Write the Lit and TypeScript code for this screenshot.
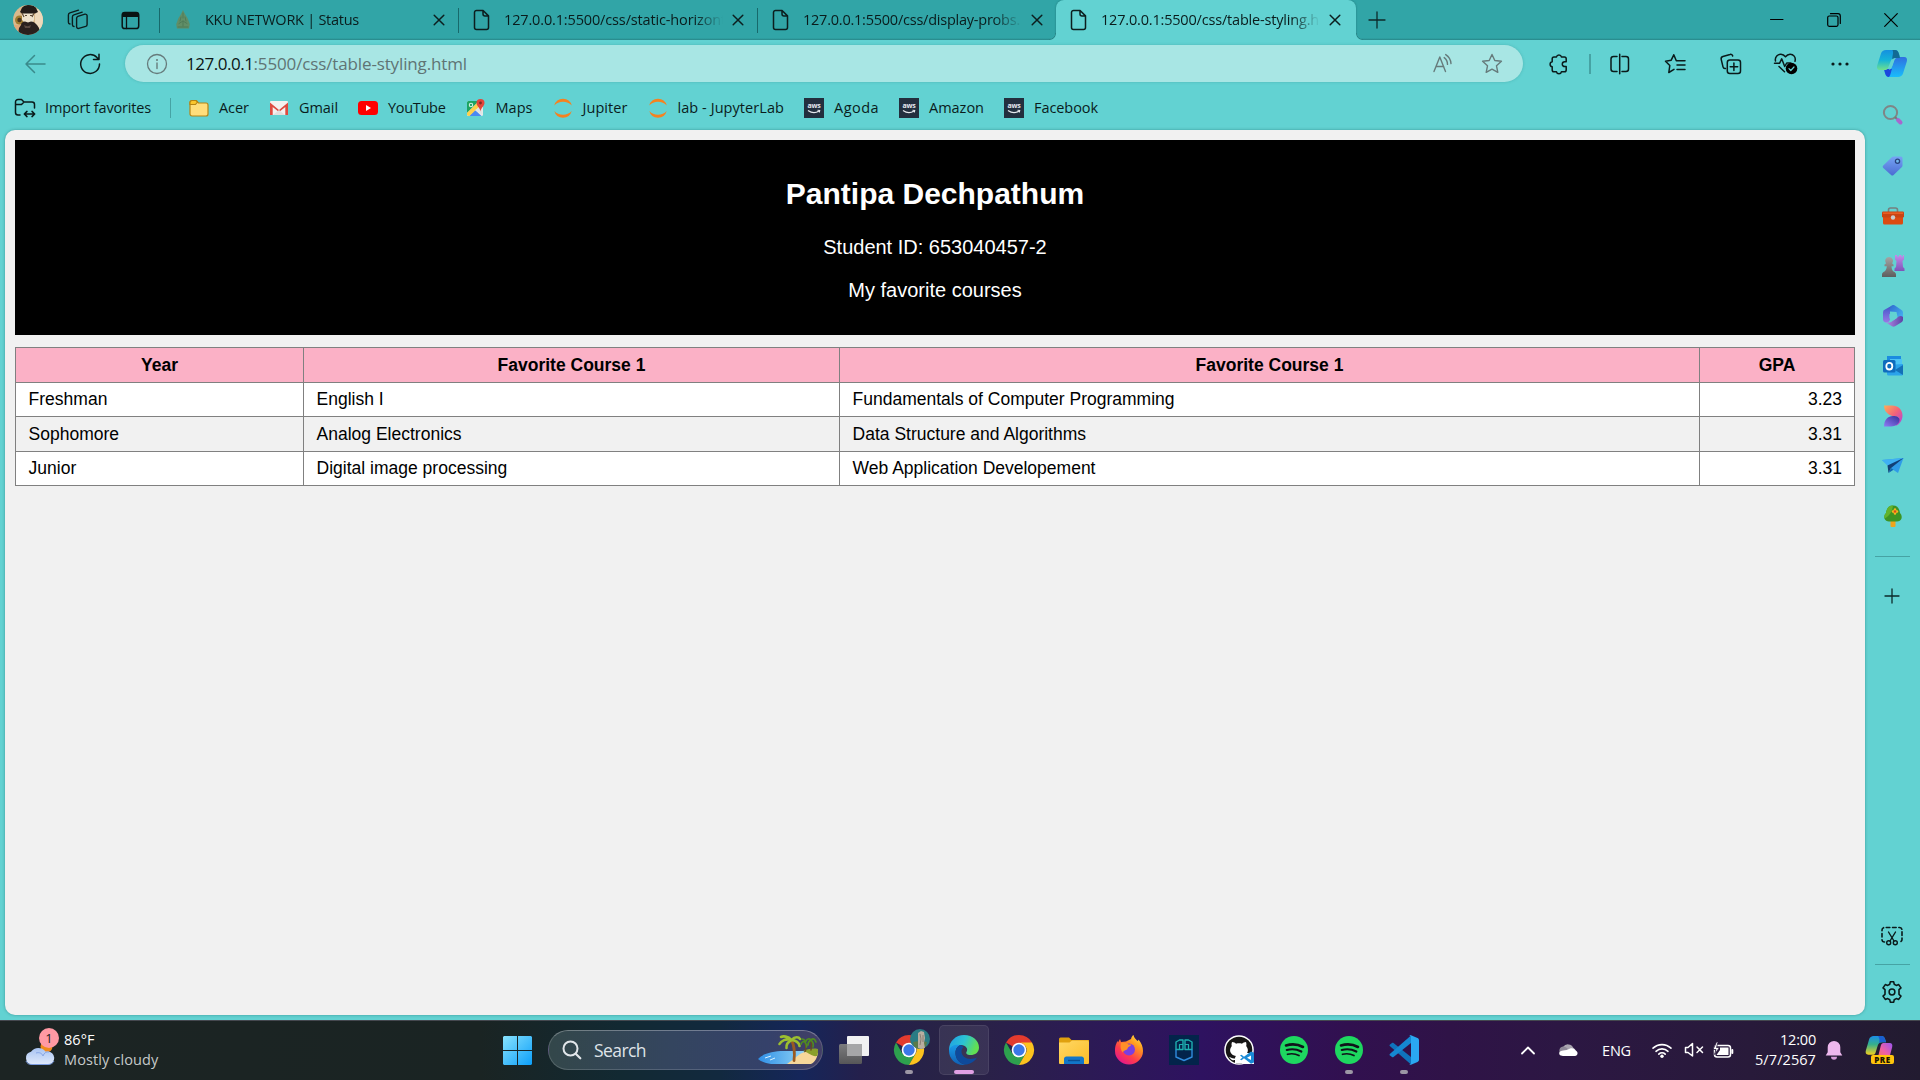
import { LitElement, html, css, svg, nothing } from "lit";
import { customElement, property } from "lit/decorators.js";

/* A one-line label whose tracking is tuned so that the text fills a given width. */
@customElement("fit-label")
class FitLabel extends LitElement {
  @property() text = "";
  @property({ type: Number }) w = 0;
  static styles = css`
    :host { display: inline-block; white-space: pre; flex: none; }
    .t { display: inline-block; }
  `;
  firstUpdated() {
    const el = this.renderRoot.querySelector(".t") as HTMLElement;
    this.style.width = this.w + "px";
    const natural = el.getBoundingClientRect().width;
    el.style.letterSpacing = (this.w - natural) / Math.max(1, this.text.length) + "px";
  }
  render() {
    return html`<span class="t">${this.text}</span>`;
  }
}

const box = (w: number, h: number, body: unknown) =>
  html`<svg width=${w} height=${h} viewBox="0 0 ${w} ${h}" fill="none" stroke-linecap="round" stroke-linejoin="round">${body}</svg>`;

/* ---------- line icons ---------- */
const docIcon = () => box(18, 22, svg`<path d="M3.5 1.5h6.6l5.4 5.4v11.600a2 2 0 0 1-2 2h-10a2 2 0 0 1-2-2v-15a2 2 0 0 1 2-2z M10 1.800v3.200a2 2 0 0 0 2 2h3.300" stroke="#0c1e1e" stroke-width="1.500"/>`);
const closeIcon = () => box(12, 12, svg`<path d="M1.200 1.200l9.600 9.600M10.800 1.200l-9.600 9.600" stroke="#0c1e1e" stroke-width="1.500"/>`);
const kkuIcon = () => box(16, 20, svg`
  <path d="M8 0l2.200 4.600 2.400 3.600 2.200 6-.8 4.200H2l-.8-4.200 2.200-6 2.400-3.600z" fill="#6a8a5c" opacity=".85"/>
  <path d="M8 3v5M6 7l-1 4M10 7l1 4M4 13.500l4-2.500 4 2.500M3 17h10M8 11v5" stroke="#4f7a58" stroke-width="1"/>`);
const workspacesIcon = () => box(22, 22, svg`<g stroke="#0c1e1e" stroke-width="1.400">
  <path d="M9.600 9.200a2 2 0 0 1 1.300-1.800l7-2.200a1.700 1.700 0 0 1 2.200 1.600v8.700a2 2 0 0 1-1.400 1.900l-6.900 2a1.700 1.700 0 0 1-2.200-1.600z"/>
  <path d="M7 17.500a1.800 1.800 0 0 1-1.600-1.800V8a2.200 2.200 0 0 1 1.500-2.100l8.300-2.700"/><path d="M3 15a1.800 1.800 0 0 1-1.600-1.800V6a2.200 2.200 0 0 1 1.500-2.100L11.500 1.100"/></g>`);
const tabActionsIcon = () => box(19, 19, svg`<rect x="1.200" y="1.500" width="16.500" height="16" rx="2.600" stroke="#0a1414" stroke-width="1.500"/>
  <path d="M1.200 6V4a3 3 0 0 1 3-3h10.500a3 3 0 0 1 3 3v2z" fill="#0a1414"/><path d="M5.500 6v11.500" stroke="#0a1414" stroke-width="1.300"/>`);
const avatarIcon = () => html`<svg width="30" height="30" viewBox="0 0 30 30"><defs><clipPath id="av"><circle cx="15" cy="15" r="15"/></clipPath></defs>
  <g clip-path="url(#av)"><rect width="30" height="30" fill="#d9b98c"/><path d="M22 4h8v20h-8z" fill="#eed9bb"/><path d="M0 20h10v10H0z" fill="#e0a878"/>
  <circle cx="6.500" cy="15" r="4.500" fill="#a07c30"/><circle cx="6.500" cy="15" r="2.200" fill="#4a3720"/>
  <path d="M9 8h12v7l-2 3h-7l-3-3z" fill="#eee2cc"/><path d="M8 5c1-4 5-5 8-5s7 1 8 5l1 2-3 1.500H9L7 7z" fill="#241c18"/>
  <path d="M9 8l2 4M21 8l-2 4M12 10.500h2M17 10.500h2" stroke="#5e4a35" stroke-width="1.200"/>
  <path d="M8 20c0-2 2-3.500 4-3.500l3 1 3-1c2 0 4 1 6 3.500l2 3 1 7H5l1-7z" fill="#2a211e"/><path d="M11 20c2 1.500 5 1.500 7 0l-1 3h-5z" fill="#5a4a42"/></g></svg>`;
const plusIcon = (s: number, c = "#0c2a2a") => box(s, s, svg`<path d="M${s / 2} 1v${s - 2}M1 ${s / 2}h${s - 2}" stroke=${c} stroke-width="1.300"/>`);
const minIcon = () => box(14, 14, svg`<path d="M.5 6.500h12.500" stroke="#000" stroke-width="1"/>`);
const restoreIcon = () => box(14, 14, svg`<rect x=".7" y="3" width="10.300" height="10.300" rx="1.500" stroke="#000" stroke-width="1.200"/><path d="M3.500.7h7.500a2.300 2.300 0 0 1 2.300 2.300v7.500" stroke="#000" stroke-width="1.200"/>`);
const winCloseIcon = () => box(14, 14, svg`<path d="M.7.7l12.600 12.600M13.300.7L.7 13.300" stroke="#000" stroke-width="1.200"/>`);
const backIcon = () => box(22, 20, svg`<path d="M10.500 1.500L2 10l8.500 8.500M2 10h19" stroke="#3a8a8b" stroke-width="1.500"/>`);
const refreshIcon = () => box(22, 22, svg`<path d="M20.500 11a9.400 9.400 0 1 1-2.500-6.400l1.800 1.800M20 1.200v5.300h-5.500" stroke="#0a1a1a" stroke-width="1.500"/>`);
const infoIcon = () => box(22, 22, svg`<circle cx="11" cy="11" r="9.500" stroke="#667b7b" stroke-width="1.300"/><path d="M11 10v5.500" stroke="#667b7b" stroke-width="1.400"/><circle cx="11" cy="6.900" r="1" fill="#667b7b"/>`);
const readAloudIcon = () => box(22, 22, svg`<g stroke="#667b7b" stroke-width="1.400"><path d="M2 18.500L7.800 4l5.700 14.500M4 13.500h7.700"/><path d="M12.200 4.600a8.400 8.400 0 0 1 3.300 6.800M13.700 1.600a11.600 11.600 0 0 1 5.300 9"/></g>`);
const starIcon = () => box(22, 22, svg`<path d="M11 1.500l2.800 6 6.600.8-4.900 4.500 1.300 6.500-5.800-3.200-5.800 3.200 1.300-6.500L1.600 8.300l6.600-.8z" stroke="#667b7b" stroke-width="1.400"/>`);
const puzzleIcon = () => box(22, 22, svg`<path d="M6 3.900h2.500a2.500 2.500 0 0 1 4.900 0h3a1.800 1.800 0 0 1 1.800 1.800v3.100h-1.500a2.400 2.400 0 0 0 0 4.800h1.500v3.400a1.800 1.800 0 0 1-1.800 1.800h-3a2.500 2.500 0 0 1-4.900 0H6a1.800 1.800 0 0 1-1.800-1.800v-3.200a2.600 2.600 0 0 1 0-5.100V5.700A1.800 1.800 0 0 1 6 3.900z" stroke="#0a1a1a" stroke-width="1.500"/>`);
const splitIcon = () => box(22, 22, svg`<path d="M8 3.500H4.500a2.500 2.500 0 0 0-2.500 2.500v10a2.500 2.500 0 0 0 2.500 2.500H8M13 3.500h4a2.500 2.500 0 0 1 2.500 2.500v10a2.500 2.500 0 0 1-2.500 2.500h-4M10.700 1.200v19.500" stroke="#0a1a1a" stroke-width="1.500"/>`);
const favListIcon = () => box(24, 22, svg`<path d="M12.300 7.700L9.800 1.800 7.200 7.200 1.500 8.200l4.300 4.400-1 6.900 5.200-3.200M12.300 7.700h8.700M13 12h8M13 16.500h8" transform="translate(1 0)" stroke="#0a1a1a" stroke-width="1.500"/>`);
const collectionsIcon = () => box(22, 22, svg`<g stroke="#0a1a1a" stroke-width="1.500"><path d="M5.500 15.500c-1.300.2-2.200-.4-2.500-1.600L1.200 6.300c-.3-1.400.3-2.400 1.700-2.800L10 1.500c1.300-.4 2.400.2 2.700 1.500"/><rect x="7.300" y="7" width="13.200" height="13.500" rx="2.500"/><path d="M13.900 10v7.500M10.200 13.700h7.500"/></g>`);
const healthIcon = () => box(26, 24, svg`<path d="M2.500 9C1.500 5 5 2 8 2.200c2 .1 3.500 1.300 4.500 2.600 1-1.300 2.500-2.500 4.500-2.600 3.300-.1 6.200 3 5 7M1.500 11.300h5l2.200-4.500 3 7.700 2-3.500h4M6 14.500l5.500 5.200" stroke="#0a1a1a" stroke-width="1.500"/><circle cx="18.500" cy="16.500" r="5.800" fill="#000"/><path d="M16 16.700l1.800 1.800 3.200-3.500" stroke="#62d2d2" stroke-width="1.200"/>`);
const dotsIcon = () => box(18, 6, svg`<g fill="#0a1a1a"><circle cx="2" cy="3" r="1.600"/><circle cx="9" cy="3" r="1.600"/><circle cx="16" cy="3" r="1.600"/></g>`);
const copilotIcon = () => html`<svg width="30" height="27" viewBox="0 0 30 27"><defs>
  <linearGradient id="c1" x1="0" y1="0" x2="0" y2="1"><stop offset="0" stop-color="#1590e0"/><stop offset=".5" stop-color="#14b3d8"/><stop offset="1" stop-color="#6fe08e"/></linearGradient>
  <linearGradient id="c2" x1="0" y1="0" x2="0" y2="1"><stop offset="0" stop-color="#2f6fe0"/><stop offset="1" stop-color="#19bdfb"/></linearGradient></defs>
  <path d="M21 27h-9c-2.300 0-3.200-1.500-4-4l-1-4h4c2 0 3.500-1 4.300-3.500L17.500 9c.6-1.500 1.500-2 3-2H27c2.700 0 3.500 2 2.800 4.600L26 23.500c-.7 2-2.500 3.500-5 3.500z" fill="url(#c2)"/>
  <path d="M12 27c-2.300 0-3.200-1.500-4-4l-1-4h8C14 21 13.800 25 12 27z" fill="#1c47dd"/>
  <path d="M9 0h9c2.300 0 3.200 1.500 4 4l1 4h-5c-3 0-4 2-4.800 4.500L11 18c-.6 1.500-1.500 2-3 2H3c-2.700 0-3.500-2-2.800-4.600L4 3.500C4.700 1.500 6.500 0 9 0z" fill="url(#c1)"/>
  <path d="M15.500 0H18c2.300 0 3.200 1.500 4 4l1 4h-4c-1.500 0-2.700.2-3.600 1.400C15 6 17 3 15.500 0z" fill="#126a94"/>
  <path d="M15 11l3-3h2.500c-1.500 0-2.500.5-3 2l-2.500 7c-.6 1.500-1.500 2.500-3 2.800z" fill="#62d2d2"/></svg>`;

/* ---------- favourites ---------- */
const importIcon = () => box(22, 20, svg`<g stroke="#0a1a1a" stroke-width="1.500"><path d="M6 17H4a2.500 2.500 0 0 1-2.500-2.500V4A2.500 2.500 0 0 1 4 1.500h3.500L10 4H18a2.500 2.500 0 0 1 2.500 2.500V10M1.500 6.500h6L10 4"/><path d="M10.500 16h10M13 13.400L10.300 16l2.700 2.600M18 13.400l2.700 2.600-2.700 2.600"/></g>`);
const folderIcon = () => box(20, 18, svg`<path d="M1 3.500A2 2 0 0 1 3 1.500h4L9.500 4H17a2 2 0 0 1 2 2v9a2 2 0 0 1-2 2H3a2 2 0 0 1-2-2z" fill="#ffde7b" stroke="#b68413" stroke-width="1.200"/><path d="M1 5.500v-2a2 2 0 0 1 2-2h4L8.500 3 6.500 5.500z" fill="#fbc62c" stroke="#b68413" stroke-width="1.200"/>`);
const gmailIcon = () => box(20, 14, svg`<rect x="1" width="18" height="14" rx="1" fill="#f4f1f0"/><path d="M1 14V1.500L10 9l9-7.500V14h-2.700V6L10 11 3.700 6v8z" fill="#dd4b40"/><path d="M4 14l6-5 6 5z" fill="#e3dfde"/>`);
const ytIcon = () => box(20, 14, svg`<rect width="20" height="14" rx="3.500" fill="#f00"/><path d="M8 4l5 3-5 3z" fill="#fff"/>`);
const mapsIcon = () => box(20, 20, svg`<rect x="1" y="3" width="16" height="15" rx="1.500" fill="#e8edea"/><path d="M1 4.500A1.500 1.500 0 0 1 2.500 3H13L1 15z" fill="#1fa463"/><path d="M3 18l6-6 6.500 6z" fill="#4a89f3"/><path d="M1 15L13 3l3 3L3.500 18H2.500L1 17z" fill="#ffd04b"/><path d="M9 12l7.500-4V17z" fill="#dfe5e5"/><circle cx="5" cy="7" r="1.700" stroke="#d6f0e0" stroke-width="1.100"/><path d="M14.500 1a4 4 0 0 1 4 4c0 3-3.500 4.500-4 8.500-.5-4-4-5.500-4-8.500a4 4 0 0 1 4-4z" fill="#e5453a"/><circle cx="14.500" cy="5" r="1.400" fill="#7d2a24"/>`);
const jupyterIcon = () => box(20, 20, svg`<path d="M1.300 7.500a9 9 0 0 1 17.400 0 12 12 0 0 0-17.400 0zM1.300 13a9 9 0 0 0 17.400 0 12 12 0 0 1-17.400 0z" fill="#f58220"/>`);
const awsIcon = () => html`<span class="aws"><span class="awst">aws</span><svg width="14" height="5" viewBox="0 0 14 5" fill="none"><path d="M1 .5c3.500 2.500 8 2.500 11 .5M10.500 .3l2.200.2-.4 2" stroke="#e6e9ee" stroke-width="1.100"/></svg></span>`;

/* ---------- sidebar ---------- */
const sSearch = () => box(22, 22, svg`<circle cx="8.500" cy="8.500" r="6.600" stroke="#7f8586" stroke-width="2"/><path d="M13.500 13.500l2 2" stroke="#777" stroke-width="2"/><path d="M16 16l2.500 2.500" stroke="#a767cf" stroke-width="4"/>`);
const sTag = () => html`<svg width="22" height="22" viewBox="0 0 22 22"><defs><linearGradient id="tg" x1="0" y1="0" x2="0" y2="1"><stop offset="0" stop-color="#76a4f4"/><stop offset="1" stop-color="#4b6cd2"/></linearGradient></defs><path d="M11.500 1.500h7.500A1.500 1.500 0 0 1 20.500 3v7.500c0 .6-.2 1-.6 1.400l-8.300 8c-.8.800-1.800.800-2.500 0L1.300 13c-.8-.8-.8-1.800 0-2.500L10 2c.4-.3.900-.5 1.500-.5z" fill="url(#tg)"/><circle cx="15.500" cy="6.200" r="2.100" fill="#72b7ee" stroke="#29437e" stroke-width="1.300"/></svg>`;
const sTool = () => box(24, 20, svg`<path d="M7.500 6V4a2 2 0 0 1 2-2h5a2 2 0 0 1 2 2v2" stroke="#75807f" stroke-width="1.600"/><rect x="2" y="9" width="20" height="9.500" rx="1.500" fill="#dc4b12"/><rect x="1" y="5.500" width="22" height="6" rx="1.200" fill="#c94413"/><path d="M2 6.500h20v1.300H2z" fill="#f06427"/><circle cx="12" cy="11.500" r="2.200" fill="#c9ccce"/>`);
const sChess = () => html`<svg width="24" height="24" viewBox="0 0 24 24"><defs><linearGradient id="rk" x1="0" y1="0" x2="0" y2="1"><stop offset="0" stop-color="#c48bea"/><stop offset="1" stop-color="#7d55b8"/></linearGradient><linearGradient id="pw" x1="0" y1="0" x2="0" y2="1"><stop offset="0" stop-color="#a5a5a5"/><stop offset="1" stop-color="#5e5e5e"/></linearGradient></defs><path d="M14 1h2v1.500h2V1h2.500v1.500h1.500V1h1v4.500l-1.500 1.500.5 6 1.500 1.500V17H13.500v-2.500L15 13l.5-6L14 5.500z" fill="url(#rk)"/><path d="M8 3a4 4 0 0 1 3.200 6.500L12.500 10.500v1.800h-2c.2 2.500.5 4 2 5.200 1.500.5 2.500 1.500 2.500 3V23H1v-2.500c0-1.500 1-2.500 2.500-3C5 16.300 5.600 14.800 5.800 12.300H3.500v-1.800l1.500-1A4 4 0 0 1 8 3z" fill="url(#pw)"/></svg>`;
const s365 = () => html`<svg width="22" height="24" viewBox="0 0 22 24"><defs><linearGradient id="m1" x1="0" y1="0" x2="0" y2="1"><stop offset="0" stop-color="#3a55c8"/><stop offset="1" stop-color="#9b77e6"/></linearGradient><linearGradient id="m2" x1="0" y1="0" x2="1" y2="1"><stop offset="0" stop-color="#2f6bd0"/><stop offset="1" stop-color="#48b9f4"/></linearGradient><linearGradient id="m3" x1="0" y1="0" x2="1" y2="0"><stop offset="0" stop-color="#b58be8"/><stop offset="1" stop-color="#5b43a6"/></linearGradient></defs>
  <path d="M11 1L3 5.500A3 3 0 0 0 1 8.500v7a3 3 0 0 0 1.500 2.500c2.500 1.500 5 0 5.500-2.500V7z" fill="url(#m1)"/><path d="M11 1c-2 1-3.500 2-3 6.500l6.500.5 1 5 5.500 3V8.500a3 3 0 0 0-1.500-2.500L12.500 1.300A2 2 0 0 0 11 1z" fill="url(#m2)"/><path d="M21 13c-1.500-1.500-3.500-1-5 0l-5.500 4c-1.500 1.500-4.500 2-7 1.300l6.500 4a3 3 0 0 0 3 0l6.500-4A3 3 0 0 0 21 16z" fill="url(#m3)"/><path d="M11 8l3.700 2.200v4L11 16.500l-3.600-2.200v-4z" fill="#62d2d2"/></svg>`;
const sOutlook = () => html`<svg width="22" height="22" viewBox="0 0 22 22"><path d="M5 1h14v7H5z" fill="#1b8ce0"/><path d="M8 4h12v8H8z" fill="#4cc3f5"/><path d="M5 10l16-1v10a1.500 1.500 0 0 1-1.500 1.500H6.500A1.500 1.500 0 0 1 5 19z" fill="#2ba3ea"/><path d="M21 10l-8 5 8 5z" fill="#1370b8"/><rect x="1" y="5" width="12.500" height="12.500" rx="1.500" fill="#0f6cbd"/><ellipse cx="7.300" cy="11.200" rx="3" ry="3.300" fill="none" stroke="#fff" stroke-width="1.800"/></svg>`;
const sDesigner = () => html`<svg width="22" height="24" viewBox="0 0 22 24"><defs><linearGradient id="d1" x1="0" y1="0" x2="1" y2="1"><stop offset="0" stop-color="#ffad54"/><stop offset=".5" stop-color="#f2627a"/><stop offset="1" stop-color="#a63ee6"/></linearGradient><linearGradient id="d2" x1="0" y1="1" x2="1" y2="0"><stop offset="0" stop-color="#8f7bf5"/><stop offset="1" stop-color="#35309a"/></linearGradient></defs><path d="M2 1.500h8c6 0 10.500 4 10.500 10 0 5-3 9-7 10.500l3-9C10 13 2 10 2 1.500z" fill="url(#d1)"/><path d="M2 22.500C2 16 6 12 11 12c4 0 6.500 1.500 6.500 4 0 3.500-4 6.500-8.500 6.500z" fill="url(#d2)"/></svg>`;
const sPlane = () => box(24, 18, svg`<path d="M1 3L22.500 1 17 16l-6-4z" fill="#2f9be8"/><path d="M1 3L22.500 1 6.500 8.500z" fill="#3fb0f3"/><path d="M6.500 8.500L22.500 1 10 11l-2.500 5z" fill="#123f75"/><path d="M7.500 16L10 11l2.500 1.800z" fill="#0f66b4"/>`);
const sTree = () => box(20, 24, svg`<rect x="7.500" y="15" width="5" height="8" rx="1" fill="#f0a41b"/><path d="M10 1.500c5 0 6.500 4 7 7.500 1.500 1.500 2 3.500 1.500 5.500-.6 2-2.500 3-4.500 3H6c-2 0-3.900-1-4.500-3-.5-2 0-4 1.500-5.500.5-3.500 2-7.500 7-7.500z" fill="#3d9423"/><path d="M10 1.500c-5 0-6.500 4-7 7.500-1.500 1.500-2 3.500-1.500 5.500 3-1 8-6 8.500-13z" fill="#62b32b"/><path d="M10 7.500h4M12 5.500v4" stroke="#f7b51d" stroke-width="2.600"/><circle cx="12" cy="7.500" r="1.200" fill="#d84a1b"/>`);
const sShot = () => box(24, 22, svg`<path d="M4.500 17A2.500 2.500 0 0 1 2 14.500V5a2.500 2.500 0 0 1 2.500-2.500h15A2.500 2.500 0 0 1 22 5v9.500a2.500 2.500 0 0 1-2.500 2.500" stroke="#0a1a1a" stroke-width="1.600" stroke-dasharray="3.600 2.700"/><path d="M8.500 7l5.500 9M15.500 7L10 16" stroke="#0a1a1a" stroke-width="1.400"/><circle cx="8.700" cy="17.800" r="2" stroke="#0a1a1a" stroke-width="1.400"/><circle cx="15.300" cy="17.800" r="2" stroke="#0a1a1a" stroke-width="1.400"/>`);
const sGear = () => box(24, 24, svg`<path d="M9.800 4.200L10.300 1.800h3.400l.5 2.400 2.100 1.200 2.400-.8 2.300 3.300-2 1.800v4.600l2 1.800-2.300 3.300-2.400-.8-2.100 1.200-.5 2.400h-3.400l-.5-2.400-2.100-1.200-2.400.8-2.300-3.300 2-1.800V9.700L3 7.900l2.300-3.300 2.400.8z" stroke="#0a1a1a" stroke-width="1.600"/><circle cx="12" cy="12" r="2.900" stroke="#0a1a1a" stroke-width="1.500"/>`);

/* ---------- taskbar ---------- */
const weatherIcon = () => html`<svg width="32" height="22" viewBox="0 0 32 22"><defs><linearGradient id="wc" x1="0" y1="0" x2="0" y2="1"><stop offset="0" stop-color="#a9c4f2"/><stop offset="1" stop-color="#dfe9fb"/></linearGradient></defs><circle cx="22.500" cy="2.500" r="6" fill="#f08a1c"/><path d="M8 20.500a6.500 6.500 0 0 1-1-12.800A9 9 0 0 1 21.500 7.500h2A6.500 6.500 0 0 1 24 20.500z" fill="url(#wc)"/><path d="M12 9c3-1 6 0 7 3 1-3 3-4.500 6-4" fill="none" stroke="#86a6e6" stroke-width="1"/><path d="M2 17c1 2.500 3 3.500 6 3.500h16c3 0 5-1.500 6-3.500" fill="none" stroke="#7a9be0" stroke-width="1"/></svg>`;
const winIcon = () => html`<svg width="29" height="29" viewBox="0 0 29 29"><defs><linearGradient id="wn" gradientUnits="userSpaceOnUse" x1="0" y1="0" x2="29" y2="29"><stop offset="0" stop-color="#88e2fd"/><stop offset="1" stop-color="#0c9ffa"/></linearGradient></defs><path d="M1 0h13v14H0V1zM15 0h13l1 1v13H15zM0 15h14v14H1l-1-1zM15 15h14v13l-1 1H15z" fill="url(#wn)"/></svg>`;
const magIcon = () => box(20, 20, svg`<circle cx="8.500" cy="8.500" r="7" stroke="#e2e6ea" stroke-width="2"/><path d="M13.700 13.700l4.600 4.600" stroke="#e2e6ea" stroke-width="2.200"/>`);
const islandIcon = () => html`<svg width="62" height="32" viewBox="0 0 62 32"><defs><linearGradient id="sea" x1="0" y1="0" x2="1" y2="0"><stop offset="0" stop-color="#2f8fe6"/><stop offset="1" stop-color="#8fd2f6"/></linearGradient></defs>
  <path d="M1 25c4-5 14-8 26-8h20v13H14C8 29 3 27 1 25z" fill="url(#sea)"/><path d="M8 24l6-2M13 26l5-2" stroke="#d8f0fd" stroke-width="1"/>
  <path d="M30 30c4-3 8-6 13-10 6-3 14-3 18-1-1 5-3 9-7 11z" fill="#f6d79a"/><path d="M46 17c4-2 10-3 15-2 0 3 0 5-1 7-5 1-7-3-14-5z" fill="#8a9f2a"/>
  <g stroke-linecap="round" fill="none"><path d="M34.500 6c3 6 3.500 12 2.500 20.500" stroke="#9a5a20" stroke-width="2.800"/><path d="M48 8c1 3 1 6 .5 9M54 6c.5 4 .5 7 0 10" stroke="#6a4a20" stroke-width="1.400"/>
  <path d="M34.500 6C31 2 26 2 24 3M34.500 6C29 4 24 7 22.500 10M34.500 6C31 8 29 11 29.500 14M34.500 6C38 2 42 3 43 5M34.500 6c4 0 8 3 8 6" stroke="#9cbf30" stroke-width="2.600"/>
  <path d="M48 8c-2-1-3 0-4 2M48 8c1 2 2 3 1.500 5M48 8c0-2-1-3-3-3M54 6c-2-2-4-1-5 1M54 6c2-2 4-1 5 2M54 6c2 2 3 4 2 7M54 6c-2 1-3 3-3 5" stroke="#4f8a22" stroke-width="1.700"/></g></svg>`;
const taskViewIcon = () => html`<svg width="32" height="30" viewBox="0 0 32 30"><defs><linearGradient id="tv" x1="0" y1="0" x2="0" y2="1"><stop offset="0" stop-color="#7c7c7e"/><stop offset="1" stop-color="#565658"/></linearGradient></defs><rect x="1" y="9" width="23" height="20" rx="1.500" fill="url(#tv)"/><rect x="9" y="1" width="22" height="20" rx="1" fill="#f1f1f2"/><rect x="9" y="9" width="15" height="12" fill="#a6a6a8"/></svg>`;
const chromeIcon = () => html`<svg width="30" height="30" viewBox="0 0 30 30"><path d="M15 15L2 7.500A15 15 0 0 1 28 7.500z" fill="#e33b2e"/><path d="M2 7.500a15 15 0 0 0 13 22.500l6.500-11.200L8.500 18.700z" fill="#2da04e"/><path d="M28 7.500A15 15 0 0 1 15 30l6.500-11.200A7.500 7.500 0 0 0 15 7.500z" fill="#fcc31e"/><circle cx="15" cy="15" r="7.300" fill="#fff"/><circle cx="15" cy="15" r="5.700" fill="#3b78e7"/></svg>`;
const profileIcon = () => html`<svg class="profile" width="20" height="20" viewBox="0 0 20 20"><circle cx="10" cy="10" r="10" fill="#2a7c84"/><path d="M3 13c3-1 11-1 14 0l-1 4c-3 4-9 4-12 0z" fill="#5b7a4a"/><path d="M8 4l3-2 3 1 1 6-1 5 1 5-4 1-3-1V13z" fill="#b9aea0"/><path d="M10 5l1 5-1 6M13 6v7" stroke="#8a7f74" fill="none"/></svg>`;
const edgeIcon = () => html`<svg width="32" height="30" viewBox="0 0 32 30"><defs><linearGradient id="e1" x1="0" y1="0" x2="1" y2=".3"><stop offset="0" stop-color="#1f9de6"/><stop offset=".55" stop-color="#2cc3d3"/><stop offset="1" stop-color="#62e052"/></linearGradient><linearGradient id="e2" x1="0" y1="0" x2="0" y2="1"><stop offset="0" stop-color="#1a9be8"/><stop offset="1" stop-color="#0f5fb4"/></linearGradient></defs>
  <path d="M1 15C1 6 8 0 16 0c9 0 15 6 15 12.500 0 5-4 7.500-8.500 7.500-3.500 0-5-1.500-4-3 2-3-.5-7-5.500-7C7 10 2 13 1 17z" fill="url(#e1)"/><path d="M1 15.500C2 11 7 9 12 10c-3.500 2-5 5-4.500 9C8 25 13 29.500 18 29.700 8.500 31.500 1 24.500 1 15.500z" fill="url(#e2)"/><path d="M12 10c-3.500 2-5 5-4.500 9C8.200 26 14 30 19 29.400c4-.6 8-3.200 10-6.900-8 3.500-15 0-15.500-5.500-.2-2.500 1-4 2-4.500-1-1.500-2-2.200-3.500-2.500z" fill="#0e4a9c"/></svg>`;
const explorerIcon = () => html`<svg width="30" height="28" viewBox="0 0 30 28"><defs><linearGradient id="fx" x1="0" y1="0" x2="1" y2="1"><stop offset="0" stop-color="#ffd764"/><stop offset="1" stop-color="#fbbd28"/></linearGradient></defs><path d="M0 3a1.500 1.500 0 0 1 1.500-1.500H10l2.500 2.500H30v6H0z" fill="#e0a00e"/><path d="M0 6.500h10.500L13 4.500h16L30 6v21a1 1 0 0 1-1 1H1a1 1 0 0 1-1-1z" fill="url(#fx)"/><path d="M5 28v-5.500A2.500 2.500 0 0 1 7.500 20.500h15a2.500 2.500 0 0 1 2.500 2V28z" fill="#1276c9"/><path d="M9 24.500h12" stroke="#0a4f94" stroke-width="1.400"/></svg>`;
const firefoxIcon = () => html`<svg width="30" height="30" viewBox="0 0 30 30"><defs><linearGradient id="ff" x1="1" y1="0" x2=".3" y2="1"><stop offset="0" stop-color="#fff04a"/><stop offset=".35" stop-color="#ff9a1f"/><stop offset=".7" stop-color="#ff3d4a"/><stop offset="1" stop-color="#e4188a"/></linearGradient></defs><path d="M17 4c.5-2 1.500-3.500 2.500-4 .5 3 2.500 4 4 6 .7-.3 1-1 1-1.500C27.500 8 29 12 29 16a14 13.500 0 0 1-28 0c0-5 1-7 2.500-10l.5 1.500L6 4l1 3 5-.5z" fill="url(#ff)"/><circle cx="15" cy="14.500" r="6" fill="#7a3fe0"/><path d="M7 8c3-1 6 0 7.500 1.500h3c-1 2-3.500 2-4 4 0 2-4.500 1.500-4.500 4C7 16 6 12 7 8z" fill="#ff9028"/></svg>`;
const ggIcon = () => html`<svg width="30" height="30" viewBox="0 0 30 30" fill="none" stroke-linejoin="round"><rect width="30" height="30" fill="#03244b"/><path d="M14 5H10.500L7 7v7.500h7zM16 5h3.500L23 7v7.500h-7z" stroke="#1fb0b0" stroke-width="1.400"/><path d="M7 14.500V22l8 3.500 8-3.500v-7.500" stroke="#2f8bdc" stroke-width="1.400"/><path d="M14 9.500h-3.500v5M16 9.500h3.500v5" stroke="#1fb0b0" stroke-width="1.200"/></svg>`;
const githubIcon = () => html`<svg width="30" height="30" viewBox="0 0 30 30"><circle cx="15" cy="15" r="14.800" fill="#fff"/><circle cx="15" cy="15" r="13.300" fill="#171515"/><path d="M8 7c2 0 3 .8 4 1.700 2-.5 4-.5 6 0 1-.9 2.500-1.700 4-1.700.6 1.700.5 3 .2 4 3.500 4.500 1.300 9-4.200 10 1 1 1 2 1 3.500v3.600h-8v-3c-4 .8-4-2-6-2.700 2-.8 3 1.700 6 1 0-1 .3-1.700 1-2.400-5.500-1-7.700-5.500-4.200-10-.4-1-.4-2.300.2-4z" fill="#fff"/><path d="M17 18h13v11H19z" fill="#fff"/><path d="M27 16.500l3 1.300V27.500l-3 1.300-7-5.500-2.500 2-1.500-.8 2.500-2-2.500-2 1.500-.8 2.500 2zm0 4l-4 2.200 4 2.300z" fill="#1a8ad6"/></svg>`;
const spotifyIcon = () => html`<svg width="28" height="28" viewBox="0 0 28 28" fill="none" stroke="#10131a" stroke-linecap="round"><circle cx="14" cy="14" r="14" fill="#1ed760" stroke="none"/><path d="M6 9.500c6-1.800 12-1.200 17 1.500" stroke-width="2.600"/><path d="M6.800 14c5-1.400 10-.8 14.500 1.500" stroke-width="2.200"/><path d="M7.500 18.300c4-1 8-.6 11.500 1.300" stroke-width="1.700"/></svg>`;
const vscodeIcon = () => html`<svg width="30" height="30" viewBox="0 0 30 30"><path d="M1 9.500l2-1.600c.5-.3 1-.3 1.500 0L22 22v7.500L.8 11c-.5-.5-.4-1 .2-1.500z" fill="#0f74bd"/><path d="M1 20.500l2 1.600c.5.3 1 .3 1.500 0L22 8V.5L.8 19c-.5.500-.4 1 .2 1.500z" fill="#1588d2"/><path d="M22 .2l6.500 2.900c.9.400 1.500 1.200 1.500 2.200v19.400c0 1-.6 1.800-1.500 2.200L22 29.800c-.8.300-1.600.1-2.200-.5 1 .6 2.200-.1 2.200-1.300V2c0-1.200-1.200-1.900-2.200-1.300.6-.6 1.400-.8 2.200-.5z" fill="#2aa8f2"/></svg>`;
const chevIcon = () => box(14, 9, svg`<path d="M1 7.500L7 1.500l6 6" stroke="#fff" stroke-width="1.800"/>`);
const cloudIcon = () => html`<svg width="20" height="14" viewBox="0 0 20 14"><path d="M5 4a6 6 0 0 1 10.500 1L10 8z" fill="#aaa5b0"/><path d="M4.500 12A4.300 4.300 0 0 1 5 3.600c2.200 0 3.500.9 5 2.400L3 12z" fill="#8f8998"/><path d="M2 12.300c-1.500-1.500-.8-3.600 1-4.300C6 7 8 7.500 10 6.500c2-1.200 3.200-1.500 5.300-1.200 1.200.2 1.700 1.500 2.500 2.200C20.500 9 20 12.500 17 13H5z" fill="#fff"/></svg>`;
const wifiIcon = () => box(20, 16, svg`<g stroke="#fff" stroke-width="1.600"><path d="M1 6.200a13 13 0 0 1 18 0M4 9.300a8.700 8.700 0 0 1 12 0M6.800 12.100a4.700 4.700 0 0 1 6.400 0"/></g><circle cx="10" cy="14.200" r="1.700" fill="#fff"/>`);
const muteIcon = () => box(20, 16, svg`<g stroke="#fff" stroke-width="1.500"><path d="M1.500 5.500h2.500L8.500 1.500v12.500L4 10.500H1.500z"/><path d="M13 5l5.500 5.500M18.500 5L13 10.500"/></g>`);
const batteryIcon = () => box(22, 18, svg`<rect x="2.500" y="4.500" width="16" height="11.500" rx="2.500" stroke="#fff" stroke-width="1.500"/><path d="M20.300 9v3" stroke="#fff" stroke-width="2"/><path d="M8 6.500h8.500v7.500H4.500L8 9z" fill="#fff"/><path d="M4.500 1L1 8.500h3L2.500 13.500 7.500 6.500h-3L6 1z" fill="#fff" stroke="#2a1a3c" stroke-width=".8"/>`);
const bellIcon = () => box(18, 20, svg`<path d="M9 1a6.300 6.300 0 0 1 6.300 6.300v5l2 3.200H.7l2-3.200v-5A6.300 6.300 0 0 1 9 1z" fill="#eeb8ee"/><path d="M6 16.800h6a3 3 0 0 1-6 0z" fill="#d59ad8"/>`);
const preIcon = () => html`<span class="pre"><svg width="30" height="24" viewBox="0 0 30 27"><defs>
  <linearGradient id="p1" x1="0" y1="0" x2="0" y2="1"><stop offset="0" stop-color="#1b8fe8"/><stop offset=".45" stop-color="#35b08c"/><stop offset="1" stop-color="#f0d020"/></linearGradient>
  <linearGradient id="p2" x1="0" y1="1" x2="1" y2="0"><stop offset="0" stop-color="#f7764e"/><stop offset=".5" stop-color="#ee5fa8"/><stop offset="1" stop-color="#9a55f0"/></linearGradient></defs>
  <path d="M9 0h9c2.300 0 3.200 1.500 4 4l1 3h-4c-3 0-4.500 1-5.300 3.500L11 19c-.6 1.500-1.500 2-3 2H3c-2.700 0-3.500-2-2.800-4.600L4 3.500C4.700 1.500 6.500 0 9 0z" fill="url(#p1)"/><path d="M14 0h4c2.300 0 3.200 1.500 4 4l1 3h-5c-1.500 0-2.700.5-3.600 1.400C16 6 16 3 14 0z" fill="#1a5fd0"/>
  <path d="M21 27h-8l2-8 2-8c.6-2 1.500-3 3-3H27c2.700 0 3.500 2 2.800 4.600L27 23z" fill="url(#p2)"/></svg><b class="pretag">PRE</b></span>`;

interface Tab { icon: () => unknown; text: string; w: number; active?: boolean; line?: boolean }
const tabs: Tab[] = [
  { icon: kkuIcon, text: "KKU NETWORK | Status", w: 154, line: true },
  { icon: docIcon, text: "127.0.0.1:5500/css/static-horizont", w: 222, line: true },
  { icon: docIcon, text: "127.0.0.1:5500/css/display-probs.", w: 217 },
  { icon: docIcon, text: "127.0.0.1:5500/css/table-styling.h", w: 218, active: true },
];
const favs: [() => unknown, string, number][] = [
  [folderIcon, "Acer", 30], [gmailIcon, "Gmail", 39], [ytIcon, "YouTube", 57.5], [mapsIcon, "Maps", 37],
  [jupyterIcon, "Jupiter", 45], [jupyterIcon, "lab - JupyterLab", 106.5], [awsIcon, "Agoda", 45], [awsIcon, "Amazon", 55], [awsIcon, "Facebook", 64],
];
const rows = [
  ["Freshman", "English I", "Fundamentals of Computer Programming", "3.23"],
  ["Sophomore", "Analog Electronics", "Data Structure and Algorithms", "3.31"],
  ["Junior", "Digital image processing", "Web Application Developement", "3.31"],
];

@customElement("app-root")
class AppRoot extends LitElement {
  static styles = css`
    :host { display: flex; flex-direction: column; width: 1920px; height: 1080px; overflow: hidden; background: #62d2d2; font-family: "Open Sans", "Noto Sans", sans-serif; font-size: 14.5px; color: #0a1c1c; box-sizing: border-box; }
    * { box-sizing: border-box; }
    svg { display: block; flex: none; overflow: visible; }
    .slot { display: flex; align-items: center; justify-content: center; flex: none; }

    .tabbar { height: 40px; flex: none; display: flex; padding-right: 1px; background: linear-gradient(#31a5a7, #31a5a7 38px, #2c9698 39px, #278587); }
    .tabbar > .slot { height: 40px; }
    .s56 { width: 56px; } .s44 { width: 43px; } .s60 { width: 60px; padding-left: 2px; }
    .sep { width: 1px; height: 25px; background: #17696b; margin-top: 8px; flex: none; }
    .tab { width: 298px; height: 40px; display: flex; align-items: center; flex: none; margin-right: 1px; position: relative; }
    .tab .ico { width: 45px; height: 40px; }
    .tab .title { width: 223px; overflow: hidden; display: flex; height: 24px; line-height: 24px; mask-image: linear-gradient(90deg, #000 190px, transparent 219px); }
    .tab .x { width: 22px; height: 40px; }
    .tab.line { margin-right: 0; }
    .tab.active { background: #62d2d2; width: 300px; border-radius: 8px 8px 0 0; margin-left: -1px; box-shadow: 0 0 2px #1c7476; clip-path: inset(0 -8px 0 -8px); }
    .tab.active::before, .tab.active::after { content: ""; position: absolute; bottom: 0; width: 7px; height: 7px; }
    .tab.active::before { left: -7px; background: radial-gradient(circle at 0 0, transparent 6px, #278587 6.5px, #62d2d2 7.5px); }
    .tab.active::after { right: -7px; background: radial-gradient(circle at 100% 0, transparent 6px, #278587 6.5px, #62d2d2 7.5px); }
    .s43 { width: 40px; } .s58 { width: 57px; }
    .grow { flex: 1; }

    .toolbar { height: 48px; flex: none; display: flex; align-items: center; }
    .s35 { width: 70px; } .s40 { width: 40px; }
    .address { margin-left: 15px; width: 1398px; height: 37px; border-radius: 19px; background: #a8e6e4; box-shadow: 0 0 3px rgba(40, 130, 130, .35); display: flex; align-items: center; margin-top: -1px; flex: none; }
    .address .i { width: 61px; padding-left: 3px; }
    .url { font-size: 17px; display: flex; line-height: 24px; color: #0a1414; }
    .url .rest { color: #5f7474; }
    .s49 { width: 49px; } .s56b { width: 55.5px; }
    .vline { width: 2px; height: 20px; background: #46a3a4; flex: none; margin: 0 3px 0 -2px; }

    .below { flex: 1; display: flex; min-height: 0; }
    .left { width: 1865px; display: flex; flex-direction: column; padding: 0 0 5px 5px; flex: none; }
    .favbar { height: 42px; display: flex; align-items: center; padding: 0 0 2px 9px; flex: none; line-height: 20px; }
    .favbar .imp { display: flex; align-items: center; gap: 9px; }
    .favbar .vl { width: 1px; height: 20px; background: #46a3a4; margin: 0 18px 0 19px; }
    .fav { display: flex; align-items: center; gap: 10px; margin-right: 20px; }
    .fav .slot { width: 20px; height: 20px; }
    .aws { width: 20px; height: 20px; background: #232f3e; display: flex; flex-direction: column; align-items: center; }
    .awst { font: 700 7px/8px "Open Sans", sans-serif; color: #e6e9ee; margin-top: 3.5px; letter-spacing: -.2px; }

    .page { flex: 1; background: #f1f1f1; border-radius: 10px; padding: 10px; box-shadow: 0 0 3px rgba(20, 90, 90, .5); font-family: "Liberation Sans", Arial, sans-serif; color: #000; }
    .hero { background: #000; color: #fff; text-align: center; padding: 12.5px; height: 195px; font-size: 20px; line-height: 23px; }
    .hero h2 { font-size: 30px; line-height: 34px; margin: 24px 0 25px; }
    .hero p { margin: 20px 0; }
    .hero h2 + p { margin-top: 0; }
    table { border-collapse: collapse; table-layout: fixed; width: 1839px; margin-top: 12px; font-size: 17.5px; line-height: 20px; background: #fff; }
    .c1 { width: 288px; } .c2 { width: 536px; } .c3 { width: 860px; } .c4 { width: 155px; }
    th, td { border: 1px solid #808080; padding: 0 12px; text-align: left; height: 34px; }
    td { padding: 0 12px 1.5px 12.6px; }
    tr.tall td, tr.tall th { height: 35px; padding-bottom: 0; }
    th { background: #fbb1c6; text-align: center; font-weight: 700; }
    .even { background: #f1f1f1; }
    td.num { text-align: right; }

    .side { flex: 1; display: flex; flex-direction: column; align-items: center; padding: 2px 1px 0 0; }
    .side .slot { width: 55px; height: 50px; }
    .side .slot:first-child { height: 51px; padding-bottom: 1px; }
    .side .slot.nudge { padding-right: 2px; }
    .rule { width: 35px; height: 1px; background: #46a3a4; }
    .m1 { height: 15px; } .m2 { height: 14px; } .r2 { margin: 3px 0 2px; }
    .end { height: 3px; }

    .taskbar { height: 60px; flex: none; display: flex; align-items: center; color: #fff; border-top: 1px solid #45484f; padding-bottom: 1px;
      background: linear-gradient(90deg, #1c2423 0, #1a2423 480px, #122932 620px, #12293f 720px, #15265a 800px, #24204c 860px, #292345 960px, #2c1a55 1090px, #2e1260 1200px, #31104f 1350px, #2f1347 1450px, #2c1743 1560px, #281a3a 1750px, #221b30 1920px); }
    .weather { display: flex; width: 503px; padding-left: 24px; flex: none; align-items: center; }
    .wico { position: relative; width: 32px; height: 40px; padding-top: 14px; margin-right: 8px; }
    .badge { position: absolute; left: 15px; top: -2px; width: 20px; height: 20px; border-radius: 50%; background: #ff99a4; color: #1c1c1c; font-size: 13px; line-height: 20px; text-align: center; }
    .wtxt { display: flex; flex-direction: column; line-height: 20px; }
    .dim { color: #c6caca; }
    .search { width: 275px; height: 40px; margin: 0 10px 0 16px; border-radius: 20px; border: 1px solid rgba(255, 255, 255, .16); border-top-color: rgba(255, 255, 255, .3); background: linear-gradient(90deg, #33474a, #34455f 45%, #35416a 80%, #423f66); display: flex; align-items: center; padding-left: 13px; flex: none; font-size: 17.5px; color: #dfe3e8; }
    .search fit-label { margin-left: 12px; margin-right: 111px; }
    .app { width: 50px; height: 50px; margin-right: 5px; display: flex; align-items: center; justify-content: center; flex: none; position: relative; border-radius: 5px; }
    .app.on { background: rgba(255, 255, 255, .08); border: 1px solid rgba(255, 255, 255, .08); }
    .app i { position: absolute; bottom: 1px; left: 21px; width: 8px; height: 4px; border-radius: 2px; background: #9c97a5; }
    .app.on i { left: 14px; bottom: 0; width: 20px; background: #e0a0e4; }
    .profile { position: absolute; left: 26px; top: 4px; }
    .tray { display: flex; align-items: center; height: 100%; margin-right: 4px; }
    .t40 { width: 40px; } .t29 { width: 29px; }
    .clock { display: flex; flex-direction: column; align-items: flex-end; line-height: 20px; width: 79px; }
    .pre { display: block; position: relative; width: 30px; height: 28px; }
    .pretag { position: absolute; left: 7px; top: 19px; width: 23px; height: 9px; background: #ffc40c; color: #1a1400; border-radius: 2px; font: 800 8px/9px "Open Sans", sans-serif; letter-spacing: .5px; text-align: center; }
    .w66 { width: 68px; } .w57 { width: 57px; } .w53 { width: 52px; } .w46 { width: 46px; padding-right: 4px; }
    .w34 { width: 34px; } .w36 { width: 36px; } .wpre { width: 64px; padding-right: 10px; }
    .lift { padding-bottom: 1px; } .pad7 { width: 7px; } .pad5 { width: 5px; }
    .puz { padding-left: 4px; }
  `;

  app(icon: unknown, state = "") {
    return html`<div class="app ${state === "on" ? "on" : ""}">${icon}${state ? html`<i></i>` : nothing}</div>`;
  }

  render() {
    return html`
      <div class="tabbar">
        <div class="slot s56">${avatarIcon()}</div>
        <div class="slot s44">${workspacesIcon()}</div>
        <div class="slot s60">${tabActionsIcon()}</div>
        <div class="sep"></div>
        ${tabs.map((t) => html`<div class="tab ${t.active ? "active" : ""} ${t.line ? "line" : ""}">
            <div class="slot ico">${t.icon()}</div>
            <div class="title"><fit-label .text=${t.text} .w=${t.w}></fit-label></div>
            <div class="slot x">${closeIcon()}</div>
          </div>${t.line ? html`<div class="sep"></div>` : nothing}`)}
        <div class="slot s43">${plusIcon(18)}</div>
        <div class="grow"></div>
        <div class="slot s58">${minIcon()}</div>
        <div class="slot s58">${restoreIcon()}</div>
        <div class="slot s58">${winCloseIcon()}</div>
      </div>
      <div class="toolbar">
        <div class="slot s35">${backIcon()}</div>
        <div class="slot s40">${refreshIcon()}</div>
        <div class="address">
          <div class="slot i">${infoIcon()}</div>
          <div class="url"><fit-label .text=${"127.0.0.1"} .w=${67.5}></fit-label><fit-label class="rest" .text=${":5500/css/table-styling.html"} .w=${213.5}></fit-label></div>
          <div class="grow"></div>
          <div class="slot s49">${readAloudIcon()}</div>
          <div class="slot s49">${starIcon()}</div>
          <div class="pad7"></div>
        </div>
        <div class="slot w66 puz">${puzzleIcon()}</div>
        <div class="vline"></div>
        <div class="slot w53">${splitIcon()}</div>
        <div class="slot w57">${favListIcon()}</div>
        <div class="slot s56b">${collectionsIcon()}</div>
        <div class="slot s56b">${healthIcon()}</div>
        <div class="slot w53">${dotsIcon()}</div>
        <div class="slot w53 lift">${copilotIcon()}</div>
      </div>
      <div class="below">
        <div class="left">
          <div class="favbar">
            <div class="imp">${importIcon()}<fit-label .text=${"Import favorites"} .w=${106}></fit-label></div>
            <div class="vl"></div>
            ${favs.map(([icon, text, w]) => html`<div class="fav"><div class="slot">${icon()}</div><fit-label .text=${text} .w=${w}></fit-label></div>`)}
          </div>
          <div class="page">
            <div class="hero"><h2>Pantipa Dechpathum</h2><p>Student ID: 653040457-2</p><p>My favorite courses</p></div>
            <table>
              <colgroup><col class="c1" /><col class="c2" /><col class="c3" /><col class="c4" /></colgroup>
              <tr class="tall"><th>Year</th><th>Favorite Course 1</th><th>Favorite Course 1</th><th>GPA</th></tr>
              ${rows.map((r, i) => html`<tr class=${i === 1 ? "even tall" : ""}>${r.map((c, j) => html`<td class=${j === 3 ? "num" : ""}>${c}</td>`)}</tr>`)}
            </table>
          </div>
        </div>
        <div class="side">
          ${[sSearch, sTag, sTool, sChess, s365, sOutlook, sDesigner, sPlane, sTree].map((f) => html`<div class="slot">${f()}</div>`)}
          <div class="m1"></div>
          <div class="rule"></div>
          <div class="m2"></div>
          <div class="slot nudge">${plusIcon(16)}</div>
          <div class="grow"></div>
          <div class="slot nudge">${sShot()}</div>
          <div class="rule r2"></div>
          <div class="slot nudge">${sGear()}</div>
          <div class="end"></div>
        </div>
      </div>
      <div class="taskbar">
        <div class="weather">
          <div class="wico">${weatherIcon()}<span class="badge">1</span></div>
          <div class="wtxt"><fit-label .text=${"86°F"} .w=${30.5}></fit-label><fit-label class="dim" .text=${"Mostly cloudy"} .w=${94.5}></fit-label></div>
        </div>
        ${winIcon()}
        <div class="search">${magIcon()}<fit-label .text=${"Search"} .w=${52}></fit-label>${islandIcon()}</div>
        <div class="slot w46">${taskViewIcon()}</div>
        <div class="pad5"></div>
        ${this.app(html`${chromeIcon()}${profileIcon()}`, "run")}
        ${this.app(edgeIcon(), "on")}
        ${this.app(chromeIcon())}
        ${this.app(explorerIcon())}
        ${this.app(firefoxIcon())}
        ${this.app(ggIcon())}
        ${this.app(githubIcon())}
        ${this.app(spotifyIcon())}
        ${this.app(spotifyIcon(), "run")}
        ${this.app(vscodeIcon(), "run")}
        <div class="grow"></div>
        <div class="tray">
          <div class="slot t40">${chevIcon()}</div>
          <div class="slot t40">${cloudIcon()}</div>
          <div class="slot w57"><fit-label .text=${"ENG"} .w=${29}></fit-label></div>
          <div class="slot w34">${wifiIcon()}</div>
          <div class="slot t29">${muteIcon()}</div>
          <div class="slot t29">${batteryIcon()}</div>
          <div class="clock"><fit-label .text=${"12:00"} .w=${36}></fit-label><fit-label .text=${"5/7/2567"} .w=${61}></fit-label></div>
          <div class="slot w36">${bellIcon()}</div>
          <div class="slot wpre">${preIcon()}</div>
        </div>
      </div>
    `;
  }
}
